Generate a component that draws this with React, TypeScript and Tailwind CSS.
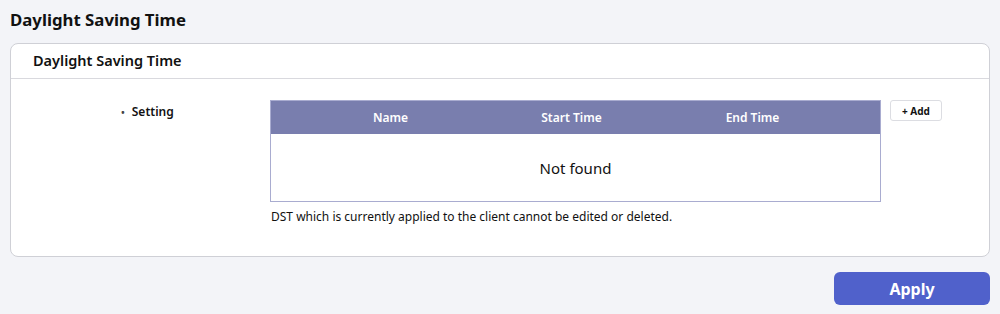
import React from "react";

export default function App() {
  return (
    <div className="w-[1000px] h-[314px] bg-[#f3f4f8] text-[#111] flex flex-col" style={{ fontFamily: '"Noto Sans", "Open Sans", sans-serif' }}>
      <div className="h-[43px] pl-[10px] pt-[9px] text-[16.8px] font-bold leading-[22px]">Daylight Saving Time</div>
      <div className="mx-[10px] h-[214px] bg-white border border-[#cfd0d6] rounded-[8px] flex flex-col">
        <div className="h-[35px] border-b border-[#d9d9de] pl-[22px] pt-[6px] text-[14.5px] font-semibold leading-[20px]">Daylight Saving Time</div>
        <div className="flex pt-[21px]">
          <div className="w-[259px] pl-[110px] pt-[4px] text-[12px] font-semibold leading-[16px] flex items-center gap-[7px] self-start">
            <span className="text-[10px] text-[#444]">•</span>
            <span>Setting</span>
          </div>
          <div className="flex flex-col">
            <div className="w-[611px] border border-[#a9acd0]">
              <div className="h-[33px] bg-[#797eae] grid grid-cols-[29px_181px_181px_181px_1fr] items-center text-white text-[12px] font-semibold">
                <div />
                <div className="text-center">Name</div>
                <div className="text-center">Start Time</div>
                <div className="text-center">End Time</div>
                <div />
              </div>
              <div className="h-[67px] flex items-center justify-center text-[15px] leading-[20px]">Not found</div>
            </div>
            <div className="pt-[7px] pl-[1px] text-[12px] leading-[16px]">DST which is currently applied to the client cannot be edited or deleted.</div>
          </div>
          <div className="pl-[9px] self-start">
            <button className="w-[52px] h-[21px] border border-[#dcdde2] rounded-[3px] bg-white text-[10px] font-bold leading-none flex items-center justify-center">+ Add</button>
          </div>
        </div>
      </div>
      <div className="flex justify-end pr-[10px] pt-[15px]">
        <button className="w-[156px] h-[33px] bg-[#5061cb] rounded-[6px] text-white text-[16px] font-bold leading-none">Apply</button>
      </div>
    </div>
  );
}
